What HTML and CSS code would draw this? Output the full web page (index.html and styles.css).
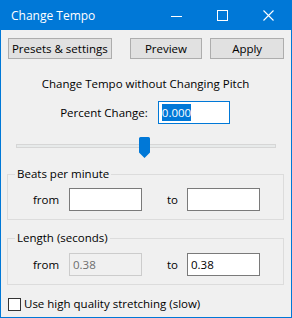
FILE: index.html
```html
<!DOCTYPE html>
<html>
<head>
    <title>Change Tempo</title>
    <link rel="stylesheet" href="styles.css">
</head>
<body>
    <div class="window">
        <div class="titlebar">
            <span class="title">Change Tempo</span>
            <div class="caption-buttons">
                <span class="caption-btn">
                    <svg width="12" height="12" viewBox="0 0 12 12"><path d="M0 6.5h11" stroke="#fff" stroke-width="1"/></svg>
                </span>
                <span class="caption-btn">
                    <svg width="12" height="12" viewBox="0 0 12 12"><rect x="0.5" y="0.5" width="10" height="10" fill="none" stroke="#fff" stroke-width="1"/></svg>
                </span>
                <span class="caption-btn">
                    <svg width="12" height="12" viewBox="0 0 12 12"><path d="M0.5 0.5l10 10M10.5 0.5l-10 10" stroke="#fff" stroke-width="1.1"/></svg>
                </span>
            </div>
        </div>

        <div class="content">
            <div class="toolbar">
                <button class="button presets-btn">Presets &amp; settings</button>
                <button class="button preview-btn">Preview</button>
                <button class="button apply-btn">Apply</button>
            </div>

            <div class="heading">Change Tempo without Changing Pitch</div>

            <div class="percent-row">
                <span>Percent Change:</span>
                <div class="textbox focused"><span class="selected">0.000</span></div>
            </div>

            <div class="slider">
                <div class="track"></div>
                <svg class="thumb" width="11" height="21" viewBox="0 0 11 21">
                    <path d="M0 1.5a1.5 1.5 0 0 1 1.5-1.5h8a1.5 1.5 0 0 1 1.5 1.5v14l-5.5 5.5l-5.5-5.5z" fill="#0078d7"/>
                </svg>
            </div>

            <fieldset class="group">
                <legend>Beats per minute</legend>
                <div class="group-row">
                    <span class="from-label">from</span>
                    <div class="textbox"></div>
                    <span class="to-label">to</span>
                    <div class="textbox"></div>
                </div>
            </fieldset>

            <fieldset class="group length-group">
                <legend>Length (seconds)</legend>
                <div class="group-row">
                    <span class="from-label">from</span>
                    <div class="textbox disabled">0.38</div>
                    <span class="to-label">to</span>
                    <div class="textbox">0.38</div>
                </div>
            </fieldset>

            <label class="check-row">
                <span class="checkbox"></span>
                <span>Use high quality stretching (slow)</span>
            </label>
        </div>
    </div>
</body>
</html>
```

FILE: styles.css
```css
body {
    margin: 0;
    font-family: 'Open Sans', 'Noto Sans', sans-serif;
    font-size: 11.5px;
    line-height: 16px;
    color: #000;
}
.window {
    width: 292px;
    height: 318px;
    box-sizing: border-box;
    border: 1px solid #0078d7;
    border-top: none;
    background-color: #f0f0f0;
    overflow: hidden;
}
.titlebar {
    height: 30px;
    margin: 0 -1px;
    background-color: #0078d7;
    display: flex;
    align-items: center;
    color: white;
}
.title {
    font-size: 12px;
    margin-left: 11px;
    margin-top: 2px;
    flex: 1;
}
.caption-buttons {
    display: flex;
    height: 30px;
}
.caption-btn {
    width: 46px;
    display: flex;
    align-items: center;
    justify-content: center;
    padding-top: 2px;
}
.content {
    padding: 8px 7px 0 7px;
}
.toolbar {
    display: flex;
    height: 21px;
}
.button {
    height: 21px;
    padding: 0;
    font-family: inherit;
    font-size: 11.5px;
    background-color: #e1e1e1;
    border: 1px solid #adadad;
    color: #000;
}
.presets-btn {
    width: 104px;
}
.preview-btn {
    width: 73px;
    margin-left: 18px;
}
.apply-btn {
    width: 74px;
    margin-left: 8px;
}
.heading {
    margin-top: 17px;
    text-align: center;
    padding-right: 1px;
}
.percent-row {
    margin-top: 9px;
    display: flex;
    align-items: center;
    justify-content: center;
    gap: 10px;
    padding-right: 2px;
}
.textbox {
    width: 73px;
    height: 23px;
    box-sizing: border-box;
    border: 1px solid #7a7a7a;
    background: white;
    padding: 2px 3px;
    line-height: 17px;
}
.textbox.focused {
    width: 72px;
    border-color: #0078d7;
}
.selected {
    background-color: #0078d7;
    color: white;
    padding: 1px 0;
}
.textbox.disabled {
    background-color: #f0f0f0;
    border-color: #cccccc;
    color: #6d6d6d;
}
.slider {
    position: relative;
    height: 21px;
    margin: 13px 8px 0 8px;
}
.track {
    position: absolute;
    left: 0;
    right: 0;
    top: 7px;
    height: 4px;
    box-sizing: border-box;
    background-color: #e7eaea;
    border: 1px solid #d6d6d6;
}
.thumb {
    position: absolute;
    left: 123px;
    top: 0;
}
.group {
    margin: 8px 0 0 -1px;
    padding: 6px 0 8px 0;
    border: 1px solid #dcdcdc;
}
.group legend {
    margin-left: 7px;
    padding: 0 2px;
    line-height: 16px;
}
.length-group {
    margin-top: 10px;
    padding-top: 7px;
}
.group-row {
    display: flex;
    align-items: center;
    padding-left: 25px;
}
.from-label {
    width: 36px;
}
.to-label {
    width: 20px;
    margin-left: 25px;
}
.check-row {
    margin-top: 11px;
    display: flex;
    align-items: center;
    gap: 3px;
}
.checkbox {
    width: 13px;
    height: 13px;
    box-sizing: border-box;
    border: 1px solid #333;
    background: white;
}
```
